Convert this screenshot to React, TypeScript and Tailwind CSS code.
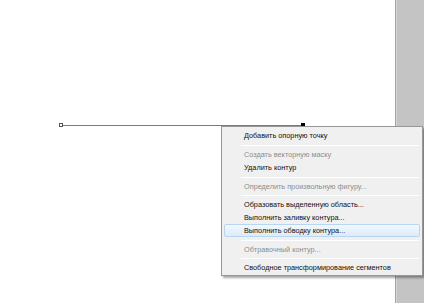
import React from "react";

type Item = { label?: string; disabled?: boolean; sep?: number; active?: boolean };

const items: Item[] = [
  { label: "Добавить опорную точку" },
  { sep: 6 },
  { label: "Создать векторную маску", disabled: true },
  { label: "Удалить контур" },
  { sep: 6 },
  { label: "Определить произвольную фигуру...", disabled: true },
  { sep: 5 },
  { label: "Образовать выделенную область..." },
  { label: "Выполнить заливку контура..." },
  { label: "Выполнить обводку контура...", active: true },
  { sep: 6 },
  { label: "Обтравочный контур...", disabled: true },
  { sep: 5 },
  { label: "Свободное трансформирование сегментов" },
];

export default function App() {
  return (
    <div
      className="relative w-[424px] h-[303px] bg-white overflow-hidden flex"
      style={{ fontFamily: '"Liberation Sans", Arial, sans-serif' }}
    >
      <div className="flex-1 relative">
        {/* path line */}
        <div className="absolute left-[61px] top-[125px] w-[241px] h-px bg-[#7a7a7a]" />
        <div className="absolute left-[59px] top-[123px] w-[4px] h-[4px] border border-[#555] bg-white" />
        <div className="absolute left-[301px] top-[123px] w-[4px] h-[4px] bg-black" />
      </div>
      <div className="w-[29px] h-full bg-[#c4c4c4] border-l border-[#a3a3a3] flex">
        <div className="w-px h-full bg-[#d6d6d6]" />
      </div>

      {/* context menu */}
      <div className="absolute left-[221px] top-[126px] w-[202px] bg-[#f0f0f0] border border-[#979797] shadow-[2px_2px_2px_rgba(0,0,0,0.35)] pt-[2px] pb-px px-[2px] flex flex-col">
        {items.map((it, i) =>
          it.sep ? (
            <div
              key={i}
              className={(it.sep === 5 ? "h-[5px]" : "h-[6px]") + " flex items-center pl-[17px] pr-[1px]"}
            >
              <div className="w-full h-px bg-[#e0e0e0] border-b border-white" />
            </div>
          ) : (
            <div
              key={i}
              className={
                "h-[13px] flex items-center pl-[19px] text-[7.3px] leading-none rounded-[2px] border " +
                (it.active
                  ? "border-[#b8d6ef] bg-gradient-to-b from-[#f2f8fd] to-[#dcebfa] "
                  : "border-transparent ") +
                (it.disabled ? "text-[#8e8e8e]" : "text-[#111]")
              }
            >
              {it.label}
            </div>
          )
        )}
      </div>
    </div>
  );
}
